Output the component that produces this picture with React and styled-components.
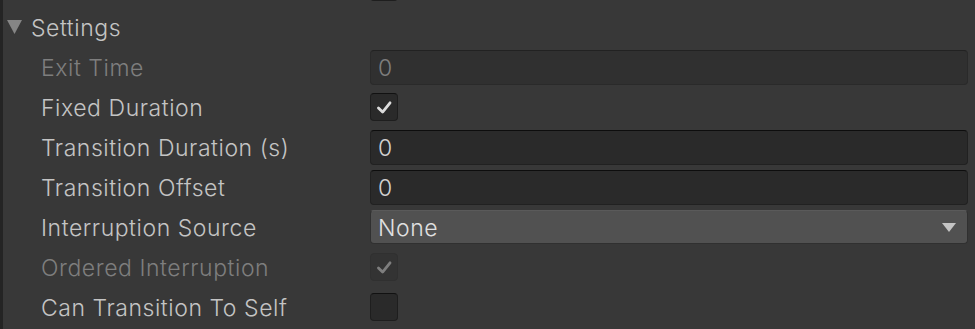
import React from 'react';
import styled, { createGlobalStyle } from 'styled-components';

const GlobalStyle = createGlobalStyle`
  html, body {
    margin: 0;
    padding: 0;
    background: #383838;
    overflow: hidden;
  }
`;

const Panel = styled.div`
  width: 975px;
  height: 329px;
  background: #383838;
  border-left: 3px solid #242424;
  box-sizing: border-box;
  font-family: Inter, "Noto Sans", sans-serif;
  font-size: 23px;
  font-weight: 300;
  letter-spacing: 0.55px;
  color: #c4c4c4;
  overflow: hidden;
`;

const Stub = styled.div`
  height: 7px;
  padding-bottom: 6px;
  box-sizing: border-box;
  display: flex;
  align-items: flex-end;
  overflow: hidden;
  padding-left: 367px;
`;

const Header = styled.div`
  height: 40px;
  display: flex;
  align-items: center;
  gap: 9px;
  padding-left: 4px;
`;

const HeaderText = styled.span`
  padding-top: 2px;
`;

const Foldout = styled.svg`
  width: 15px;
  height: 14px;
  fill: #858585;
`;

const Row = styled.div`
  height: 40px;
  display: flex;
  align-items: center;
`;

const Label = styled.div`
  width: 329px;
  padding: 2px 0 0 38px;
  color: ${({ $disabled }) => ($disabled ? '#7e7e7e' : '#c4c4c4')};
  white-space: nowrap;
`;

const Field = styled.div`
  width: 598px;
  height: 35px;
  box-sizing: border-box;
  border-radius: 4px;
  background: ${({ $disabled }) => ($disabled ? '#303030' : '#2a2a2a')};
  border: 1px solid ${({ $disabled }) => ($disabled ? '#2a2a2a' : '#212121')};
  border-top-color: ${({ $disabled }) => ($disabled ? '#222222' : '#0d0d0d')};
  padding: 2px 0 0 7px;
  display: flex;
  align-items: center;
  color: ${({ $disabled }) => ($disabled ? '#7e7e7e' : '#d2d2d2')};
`;

const Dropdown = styled.div`
  width: 598px;
  height: 34px;
  box-sizing: border-box;
  border-radius: 4px;
  background: #515151;
  border: 1px solid #303030;
  border-top-color: #5a5a5a;
  padding: 1px 11px 0 7px;
  display: flex;
  align-items: center;
  justify-content: space-between;
  color: #e0e0e0;
`;

const Box = styled.div`
  width: 28px;
  height: 28px;
  flex: none;
  box-sizing: border-box;
  border-radius: 4px;
  background: ${({ $disabled }) => ($disabled ? '#333333' : '#2a2a2a')};
  border: 1px solid ${({ $disabled }) => ($disabled ? '#303030' : '#1e1e1e')};
  border-top-color: ${({ $disabled }) => ($disabled ? '#303030' : '#111111')};
  display: flex;
  align-items: center;
  justify-content: center;
`;

const Check = styled.svg`
  width: 28px;
  height: 28px;
  fill: none;
  stroke: ${({ $disabled }) => ($disabled ? '#7e7e7e' : '#dcdcdc')};
  stroke-width: 3;
  stroke-linecap: round;
  stroke-linejoin: round;
`;

const Checkbox = ({ checked, disabled }) => (
  <Box $disabled={disabled}>
    {checked && (
      <Check $disabled={disabled} viewBox="-1 -1 28 28">
        <path d="M7 14 L11.5 18.5 L19.5 8.5" />
      </Check>
    )}
  </Box>
);

const Arrow = styled.svg`
  width: 14px;
  height: 9px;
  fill: #c4c4c4;
`;

export default function App() {
  return (
    <>
      <GlobalStyle />
      <Panel>
        <Stub>
          <Checkbox />
        </Stub>
        <Header>
          <Foldout viewBox="0 0 15 14">
            <path d="M0 0 H15 L7.5 14 Z" />
          </Foldout>
          <HeaderText>Settings</HeaderText>
        </Header>
        <Row>
          <Label $disabled>Exit Time</Label>
          <Field $disabled>0</Field>
        </Row>
        <Row>
          <Label>Fixed Duration</Label>
          <Checkbox checked />
        </Row>
        <Row>
          <Label>Transition Duration (s)</Label>
          <Field>0</Field>
        </Row>
        <Row>
          <Label>Transition Offset</Label>
          <Field>0</Field>
        </Row>
        <Row>
          <Label>Interruption Source</Label>
          <Dropdown>
            None
            <Arrow viewBox="0 0 14 9">
              <path d="M0 0 H14 L7 9 Z" />
            </Arrow>
          </Dropdown>
        </Row>
        <Row>
          <Label $disabled>Ordered Interruption</Label>
          <Checkbox checked disabled />
        </Row>
        <Row>
          <Label>Can Transition To Self</Label>
          <Checkbox />
        </Row>
      </Panel>
    </>
  );
}
